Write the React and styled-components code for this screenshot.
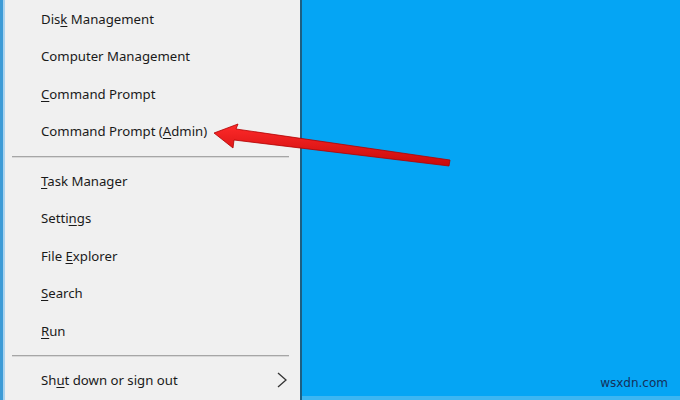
import React from "react";
import styled, { createGlobalStyle } from "styled-components";

const Global = createGlobalStyle`
  html, body { margin: 0; padding: 0; }
  body { width: 680px; height: 400px; overflow: hidden; font-family: "Noto Sans", "Open Sans", sans-serif; }
`;

const Screen = styled.div`
  position: relative;
  width: 680px;
  height: 400px;
  display: flex;
  overflow: hidden;
`;

const EdgeStrip = styled.div`
  width: 5px;
  background: linear-gradient(to right, #3d9bd6 0, #3d9bd6 3px, #a9d2ee 3px);
`;

const Menu = styled.div`
  width: 295px;
  background: #f0f0f0;
  display: flex;
  flex-direction: column;
`;

const Border = styled.div`
  width: 2px;
  background: #1d5f83;
`;

const Desktop = styled.div`
  flex: 1;
  display: flex;
  flex-direction: column;
  background: #05a5f4;
`;

const DesktopFill = styled.div`
  flex: 1;
  display: flex;
  align-items: flex-end;
  justify-content: flex-end;
  padding: 0 12px 6px 0;
`;

const DesktopBottom = styled.div`
  height: 4px;
  background: #3cb6f2;
`;

const Item = styled.div`
  height: 37.5px;
  display: flex;
  align-items: center;
  justify-content: space-between;
  padding: 0 12px 0 36px;
  font-size: 13.2px;
  color: #1a1a1a;
`;

const Key = styled.span`
  text-decoration: underline;
  text-underline-offset: 2px;
  text-decoration-thickness: 1px;
`;

const Separator = styled.div`
  height: 12px;
  display: flex;
  align-items: center;
  padding: 0 11px 0 7px;
  &::after {
    content: "";
    flex: 1;
    height: 1px;
    background: #a6a6a6;
    box-shadow: 0 1px 0 #d8d8d8;
  }
`;

const Watermark = styled.span`
  font-family: "DejaVu Sans", "Liberation Sans", sans-serif;
  font-size: 12px;
  color: #14305a;
`;

const ArrowSvg = styled.svg`
  position: absolute;
  left: 0;
  top: 0;
  pointer-events: none;
`;

const Chevron = () => (
  <svg width="12" height="16" viewBox="0 0 12 16">
    <path d="M2 1 L10 8 L2 15" fill="none" stroke="#333" strokeWidth="1.3" />
  </svg>
);

export default function App() {
  return (
    <>
      <Global />
      <Screen>
        <EdgeStrip />
        <Menu>
          <Item><span>Dis<Key>k</Key> Management</span></Item>
          <Item><span>Computer Management</span></Item>
          <Item><span><Key>C</Key>ommand Prompt</span></Item>
          <Item><span>Command Prompt (<Key>A</Key>dmin)</span></Item>
          <Separator />
          <Item><span><Key>T</Key>ask Manager</span></Item>
          <Item><span>Setti<Key>n</Key>gs</span></Item>
          <Item><span>File <Key>E</Key>xplorer</span></Item>
          <Item><span><Key>S</Key>earch</span></Item>
          <Item><span><Key>R</Key>un</span></Item>
          <Separator />
          <Item><span>Sh<Key>u</Key>t down or sign out</span><Chevron /></Item>
        </Menu>
        <Border />
        <Desktop>
          <DesktopFill>
            <Watermark>wsxdn.com</Watermark>
          </DesktopFill>
          <DesktopBottom />
        </Desktop>
        <ArrowSvg width="680" height="400" viewBox="0 0 680 400">
          <defs>
            <linearGradient id="ag" x1="0" y1="0" x2="0" y2="1">
              <stop offset="0" stopColor="#ff2a2a" />
              <stop offset="1" stopColor="#c80a0a" />
            </linearGradient>
          </defs>
          <polygon
            points="214,133 238,124 236,129 450,160 449,166 234,140 233,148"
            fill="url(#ag)"
            stroke="#b00000"
            strokeWidth="0.8"
            strokeLinejoin="round"
          />
        </ArrowSvg>
      </Screen>
    </>
  );
}
